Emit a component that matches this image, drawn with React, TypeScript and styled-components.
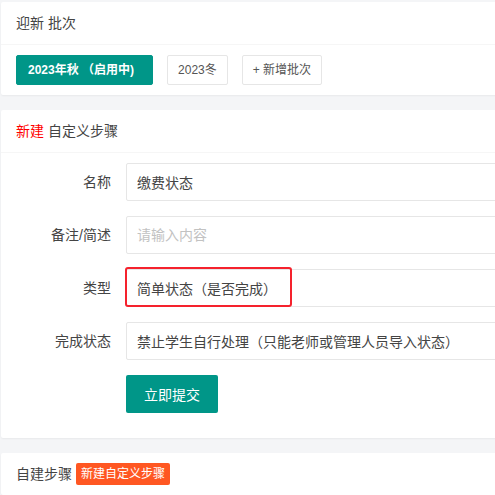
import React from 'react';
import styled, { createGlobalStyle } from 'styled-components';

const GlobalStyle = createGlobalStyle`
  html, body {
    margin: 0;
    padding: 0;
    background: #f4f5f7;
    overflow: hidden;
  }
  body {
    font-family: "Liberation Sans", "Noto Sans CJK SC", sans-serif;
    font-size: 14px;
    color: #333;
  }
`;

const Page = styled.div`
  width: 520px;
  padding: 2px 0 0 1px;
  display: flex;
  flex-direction: column;
  gap: 15px;
`;

const Card = styled.div`
  background: #fff;
  border-radius: 2px;
  box-shadow: 0 1px 2px 0 rgba(0, 0, 0, 0.05);
`;

const CardHeader = styled.div<{ $bordered?: boolean }>`
  height: 42px;
  line-height: 42px;
  padding: 0 15px;
  border-bottom: ${(p) => (p.$bordered ? '1px solid #f6f6f6' : 'none')};
  color: #444;
  font-size: 14px;
  display: flex;
  align-items: center;
  gap: 4px;
`;

const Red = styled.span`
  color: #f00;
`;

const CardBody = styled.div`
  padding: 10px 15px;
`;

const BtnRow = styled.div`
  display: flex;
  gap: 14px;
`;

const SmallBtn = styled.button<{ $primary?: boolean }>`
  height: 30px;
  line-height: 28px;
  padding: 0 10px;
  font-family: inherit;
  font-size: 12px;
  border-radius: 2px;
  cursor: pointer;
  ${(p) =>
    p.$primary
      ? `
    background: #009688;
    border: 1px solid #009688;
    color: #fff;
    font-weight: bold;
    padding-left: 11px;
    padding-right: 18px;
  `
      : `
    background: #fff;
    border: 1px solid #e6e6e6;
    color: #555;
  `}
`;

const Form = styled.div`
  display: flex;
  flex-direction: column;
`;

const FormItem = styled.div`
  display: flex;
  margin-bottom: 15px;
`;

const Label = styled.label`
  width: 80px;
  padding: 9px 15px;
  text-align: right;
  line-height: 20px;
  color: #444;
  flex-shrink: 0;
`;

const InputWrap = styled.div`
  position: relative;
  flex: 1;
`;

const Input = styled.input`
  box-sizing: border-box;
  width: 100%;
  height: 38px;
  padding: 0 10px;
  border: 1px solid #e6e6e6;
  border-radius: 2px;
  font-family: inherit;
  font-size: 14px;
  color: #444;
  background: #fff;
  outline: none;
  &::placeholder {
    color: #c2c2c2;
  }
`;

const Highlight = styled.div`
  position: absolute;
  left: -1px;
  top: -2px;
  width: 167px;
  height: 40px;
  box-sizing: border-box;
  border: 2px solid #f5222d;
  border-radius: 3px;
  pointer-events: none;
`;

const SubmitBtn = styled.button`
  margin-left: 110px;
  height: 38px;
  padding: 0 18px;
  align-self: flex-start;
  background: #009688;
  border: none;
  border-radius: 2px;
  color: #fff;
  font-family: inherit;
  font-size: 14px;
  margin-bottom: 15px;
  cursor: pointer;
`;

const Badge = styled.span`
  display: inline-block;
  height: 22px;
  line-height: 22px;
  padding: 0 5px;
  background: #ff5722;
  color: #fff;
  font-size: 12px;
  border-radius: 2px;
`;

const fields = [
  { label: '名称', value: '缴费状态' },
  { label: '备注/简述', placeholder: '请输入内容' },
  { label: '类型', value: '简单状态（是否完成）', highlight: true },
  { label: '完成状态', value: '禁止学生自行处理（只能老师或管理人员导入状态）' },
];

export default function App() {
  return (
    <>
      <GlobalStyle />
      <Page>
        <Card>
          <CardHeader $bordered>迎新 批次</CardHeader>
          <CardBody>
            <BtnRow>
              <SmallBtn $primary>2023年秋 （启用中)</SmallBtn>
              <SmallBtn>2023冬</SmallBtn>
              <SmallBtn>+ 新增批次</SmallBtn>
            </BtnRow>
          </CardBody>
        </Card>

        <Card>
          <CardHeader $bordered>
            <span>
              <Red>新建</Red> 自定义步骤
            </span>
          </CardHeader>
          <CardBody>
            <Form>
              {fields.map((f) => (
                <FormItem key={f.label}>
                  <Label>{f.label}</Label>
                  <InputWrap>
                    <Input
                      readOnly
                      defaultValue={f.value}
                      placeholder={f.placeholder}
                    />
                    {f.highlight && <Highlight />}
                  </InputWrap>
                </FormItem>
              ))}
              <SubmitBtn>立即提交</SubmitBtn>
            </Form>
          </CardBody>
        </Card>

        <Card>
          <CardHeader>
            自建步骤 <Badge>新建自定义步骤</Badge>
          </CardHeader>
        </Card>
      </Page>
    </>
  );
}
